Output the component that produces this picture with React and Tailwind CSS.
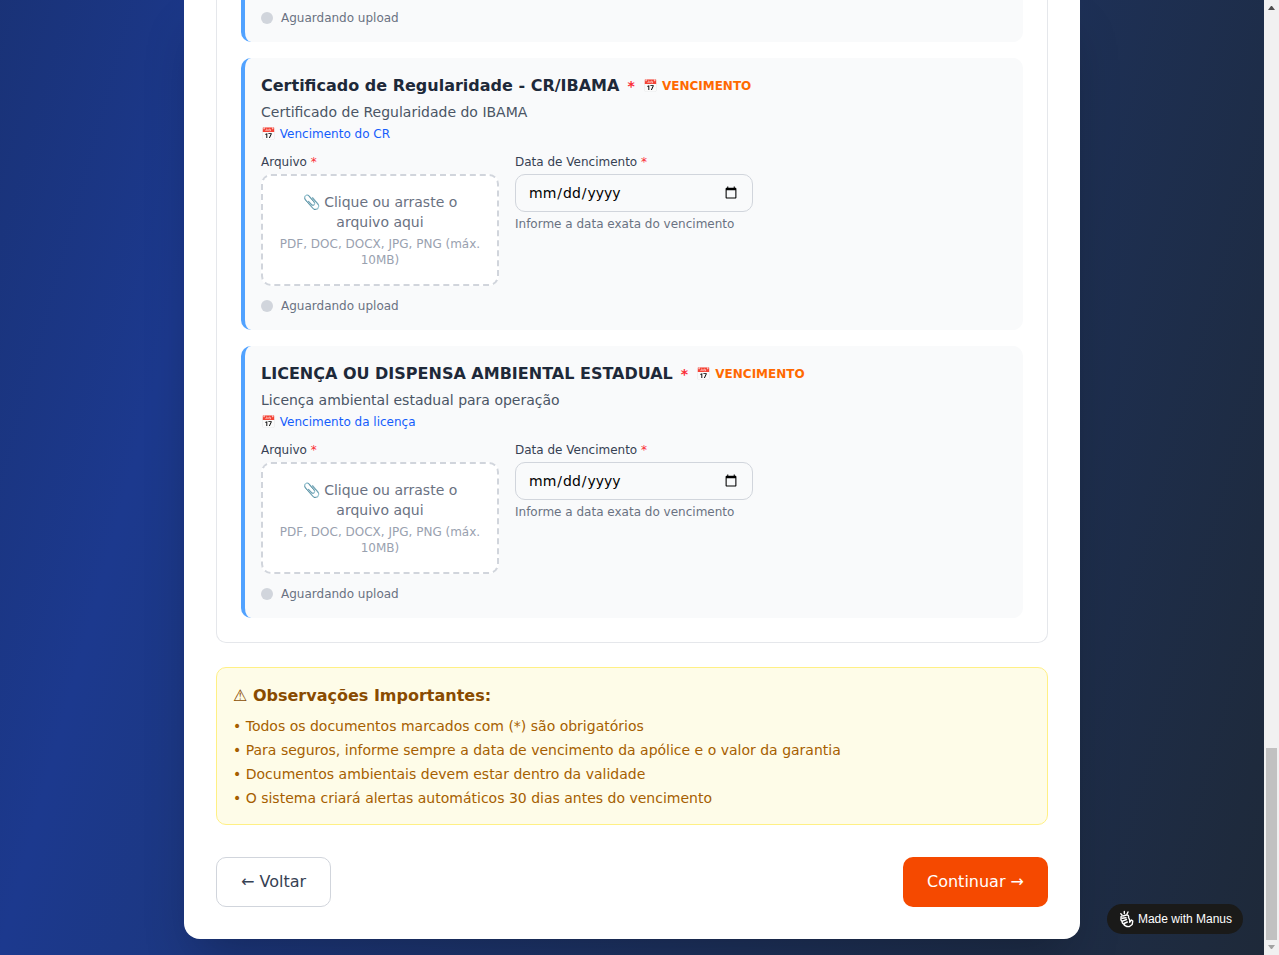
function Req({ className }) {
  return <span className={className}>*</span>;
}

function Status() {
  return (
    <div className="flex items-center gap-2 text-xs text-[#6a7282]">
      <span className="size-3 rounded-full bg-[#d1d5dc]" />
      Aguardando upload
    </div>
  );
}

function DocumentCard({ id, title, description, hint }) {
  return (
    <section className="rounded-[10px] border-l-4 border-[#51a2ff] bg-[#f9fafb] p-4">
      <div className="flex items-center gap-2">
        <h4 className="text-base font-semibold text-[#1e2939]">{title}</h4>
        <Req className="text-sm font-bold text-[#fb2c36]" />
        <span className="text-xs font-bold text-[#ff6900]">📅 VENCIMENTO</span>
      </div>
      <p className="mt-1 text-sm text-[#4a5565]">{description}</p>
      <p className="mt-1 text-xs text-[#155dfc]">📅 {hint}</p>
      <div className="mt-3 grid grid-cols-3 gap-4">
        <div>
          <label htmlFor={id + "-file"} className="block text-xs text-[#364153]">
            Arquivo <Req className="text-[#fb2c36]" />
          </label>
          <label
            htmlFor={id + "-file"}
            className="mt-1 block cursor-pointer rounded-[10px] border-2 border-dashed border-[#d1d5dc] bg-white p-4 text-center"
          >
            <input id={id + "-file"} type="file" className="sr-only" />
            <span className="block text-sm text-[#6a7282]">📎 Clique ou arraste o arquivo aqui</span>
            <span className="mt-1 block text-xs text-[#99a1af]">PDF, DOC, DOCX, JPG, PNG (máx. 10MB)</span>
          </label>
        </div>
        <div>
          <label htmlFor={id + "-date"} className="block text-xs text-[#364153]">
            Data de Vencimento <Req className="text-[#fb2c36]" />
          </label>
          <input
            id={id + "-date"}
            type="date"
            className="mt-1 block h-[38px] w-full rounded-[10px] border border-[#d1d5dc] px-3 py-2 text-sm text-black"
          />
          <p className="mt-1 text-xs text-[#6a7282]">Informe a data exata do vencimento</p>
        </div>
      </div>
      <div className="mt-3">
        <Status />
      </div>
    </section>
  );
}

const notes = [
  "Todos os documentos marcados com (*) são obrigatórios",
  "Para seguros, informe sempre a data de vencimento da apólice e o valor da garantia",
  "Documentos ambientais devem estar dentro da validade",
  "O sistema criará alertas automáticos 30 dias antes do vencimento",
];

function Scrollbar() {
  return (
    <div aria-hidden="true" className="flex w-[15px] shrink-0 flex-col items-center justify-between bg-[#f1f1f1]">
      <svg width="15" height="15" viewBox="0 0 15 15">
        <path d="M4 10L7 6H8L11 10Z" fill="#505050" />
      </svg>
      <div className="flex flex-col items-center">
        <div className="h-48 w-[11px] bg-[#c1c1c1]" />
        <svg width="15" height="15" viewBox="0 0 15 15">
          <path d="M4 5L7 9H8L11 5Z" fill="#a3a3a3" />
        </svg>
      </div>
    </div>
  );
}

export default function App() {
  return (
    <div className="flex min-h-screen font-['DejaVu_Sans',sans-serif]">
      <div className="min-w-0 flex-1 bg-[linear-gradient(to_bottom_right_in_oklab,#101828,#1c398e,#1e2939)] bg-[length:100%_4600px] bg-bottom px-4 pb-4">
        <main className="mx-auto max-w-4xl rounded-b-2xl bg-white px-8 pb-8 shadow-2xl">
          <div className="flex flex-col gap-4 rounded-b-[10px] border border-t-0 border-[#e5e7eb] px-6 pb-6">
            <section className="rounded-b-[10px] border-l-4 border-[#51a2ff] bg-[#f9fafb] px-4 pt-[10px] pb-4">
              <Status />
            </section>
            <DocumentCard
              id="cr"
              title="Certificado de Regularidade - CR/IBAMA"
              description="Certificado de Regularidade do IBAMA"
              hint="Vencimento do CR"
            />
            <DocumentCard
              id="licenca"
              title="LICENÇA OU DISPENSA AMBIENTAL ESTADUAL"
              description="Licença ambiental estadual para operação"
              hint="Vencimento da licença"
            />
          </div>

          <section className="mt-6 rounded-[10px] border border-[#fff085] bg-[#fefce8] p-4">
            <h4 className="text-base font-semibold text-[#894b00]">⚠ Observações Importantes:</h4>
            <ul className="mt-2 flex flex-col gap-1 text-sm text-[#a65f00]">
              {notes.map((note) => (
                <li key={note}>• {note}</li>
              ))}
            </ul>
          </section>

          <div className="mt-8 flex justify-between">
            <button type="button" className="rounded-[10px] border border-[#d1d5dc] px-6 py-3 text-base text-[#364153]">
              ← Voltar
            </button>
            <button type="button" className="rounded-[10px] bg-[#f54900] px-6 py-3 text-base text-white">
              Continuar →
            </button>
          </div>
        </main>
      </div>
      <Scrollbar />
      <a
        href="#manus"
        className="fixed right-9 bottom-[21px] flex h-[30px] items-center gap-1 rounded-full bg-[#1a1a19] px-[11px] font-['Liberation_Sans',sans-serif] text-xs text-white"
      >
        <svg width="16" height="18" viewBox="0 0 16 18" fill="none" stroke="currentColor" strokeWidth="1.400" strokeLinecap="round" strokeLinejoin="round">
          <path d="M2.800 3.800L4 5M6.300 1.500V3.500M10 2L9 4" />
          <path d="M3.200 7.800C2.200 6.500 3.800 5.500 5 6L8.500 5C10.200 4.800 11 6 10.500 7.500L11.500 9.500C12 10.500 11.800 11.500 11.600 12.200L13.500 10L14.800 11L14.200 14.500L11.500 16.500C8.500 17 6.500 15.500 5.500 13.800C4.200 13.500 4 12.300 4.300 11.500C2.800 10.800 2.600 8.800 3.200 7.800Z" />
          <path d="M4 8.200L8 7.800M4.500 11.200L8.500 9.500M6 13.500L9.300 12" />
        </svg>
        Made with Manus
      </a>
    </div>
  );
}
